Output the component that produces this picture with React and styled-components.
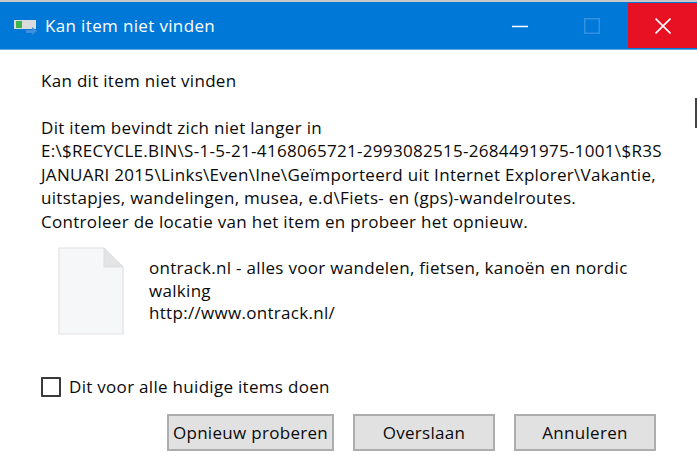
import React from "react";
import styled, { createGlobalStyle } from "styled-components";

const Global = createGlobalStyle`
  html, body {
    margin: 0;
    padding: 0;
    background: #fff;
  }
  body {
    font-family: "Open Sans", "Noto Sans", "Liberation Sans", sans-serif;
    color: #0a0a0a;
  }
`;

const Dialog = styled.div`
  position: relative;
  width: 697px;
  height: 469px;
  overflow: hidden;
  background: #fff;
  display: flex;
  flex-direction: column;
  border-top: 2px solid #c9c9c9;
  box-sizing: border-box;
`;

const TitleBar = styled.div`
  height: 47px;
  background: #0078d7;
  border-bottom: 1px solid #5aa9e6;
  display: flex;
  align-items: stretch;
  color: #fff;
  flex-shrink: 0;
`;

const TitleIcon = styled.svg`
  width: 24px;
  height: 16px;
  margin: 17px 7px 0 14px;
`;

const TitleText = styled.div`
  flex: 1;
  font-size: 17px;
  line-height: 47px;
  letter-spacing: 0.35px;
`;

const WinButton = styled.div`
  width: ${(p) => p.$w}px;
  margin: 1px 0;
  display: flex;
  align-items: center;
  justify-content: center;
  background: ${(p) => p.$bg || "transparent"};
`;

const Body = styled.div`
  padding: 19px 0 0 41px;
  font-size: 17px;
  line-height: 23.5px;
  letter-spacing: 0.3px;
`;

const Heading = styled.div`
  margin-bottom: 23px;
`;

const MessageLine = styled.div`
  white-space: nowrap;
`;

const ItemRow = styled.div`
  display: flex;
  margin-top: 14px;
`;

const FileIcon = styled.svg`
  width: 66px;
  height: 88px;
  margin-left: 17px;
  flex-shrink: 0;
`;

const ItemText = styled.div`
  margin-left: 25px;
  width: 490px;
  line-height: 22.5px;
  padding-top: 10px;
`;

const CheckRow = styled.label`
  display: flex;
  align-items: center;
  margin-top: 40px;
`;

const CheckBox = styled.span`
  width: 20px;
  height: 20px;
  border: 2px solid #3a3a3a;
  box-sizing: border-box;
  border-radius: 1px;
  margin-right: 8px;
`;

const Buttons = styled.div`
  display: flex;
  justify-content: flex-end;
  gap: 19px;
  margin-top: 15px;
  padding-right: 41px;
`;

const Button = styled.div`
  width: ${(p) => p.$w}px;
  height: 37px;
  box-sizing: border-box;
  background: #e1e1e1;
  border: 2px solid #adadad;
  text-align: center;
  line-height: 33px;
  white-space: nowrap;
`;

const ScrollTick = styled.div`
  position: absolute;
  right: 0;
  top: 96px;
  width: 2px;
  height: 30px;
  background: #444;
`;

const lines = [
  "E:\\$RECYCLE.BIN\\S-1-5-21-4168065721-2993082515-2684491975-1001\\$R3S",
  "JANUARI 2015\\Links\\Even\\Ine\\Geïmporteerd uit Internet Explorer\\Vakantie,",
  "uitstapjes, wandelingen, musea, e.d\\Fiets- en (gps)-wandelroutes.",
  "Controleer de locatie van het item en probeer het opnieuw.",
];

export default function App() {
  return (
    <Dialog>
      <Global />
      <TitleBar>
        <TitleIcon viewBox="0 0 24 16">
          <rect x="0" y="1" width="22" height="9" fill="#d8dadb" />
          <rect x="2" y="2" width="6" height="7" fill="#3fb44a" />
          <path d="M12 11h6V8l5 4-5 4v-2h-6z" fill="#3d8fdc" />
        </TitleIcon>
        <TitleText>Kan item niet vinden</TitleText>
        <WinButton $w={70}>
          <svg width="16" height="16" viewBox="0 0 16 16">
            <path d="M0 8.5h16" stroke="#fff" strokeWidth="1.5" />
          </svg>
        </WinButton>
        <WinButton $w={73}>
          <svg width="16" height="16" viewBox="0 0 16 16">
            <rect x="0.75" y="0.75" width="14.5" height="14.5" fill="none" stroke="#3391e0" strokeWidth="1.5" />
          </svg>
        </WinButton>
        <WinButton $w={69} $bg="#e81123">
          <svg width="16" height="16" viewBox="0 0 16 16">
            <path d="M0.5 0.5l15 15M15.5 0.5l-15 15" stroke="#fff" strokeWidth="1.6" />
          </svg>
        </WinButton>
      </TitleBar>
      <Body>
        <Heading>Kan dit item niet vinden</Heading>
        <MessageLine>Dit item bevindt zich niet langer in</MessageLine>
        {lines.map((l) => (
          <MessageLine key={l}>{l}</MessageLine>
        ))}
        <ItemRow>
          <FileIcon viewBox="0 0 66 88">
            <path d="M1 1h45l19 19v67H1z" fill="#f6f7f9" stroke="#e1e2e3" strokeWidth="1.2" />
            <path d="M46 1v19h19z" fill="#e3e4e6" stroke="#dcdddf" strokeWidth="1" />
          </FileIcon>
          <ItemText>
            ontrack.nl - alles voor wandelen, fietsen, kanoën en nordic walking
            <br />
            http://www.ontrack.nl/
          </ItemText>
        </ItemRow>
        <CheckRow>
          <CheckBox />
          Dit voor alle huidige items doen
        </CheckRow>
        <Buttons>
          <Button $w={167}>Opnieuw proberen</Button>
          <Button $w={142}>Overslaan</Button>
          <Button $w={142}>Annuleren</Button>
        </Buttons>
      </Body>
      <ScrollTick />
    </Dialog>
  );
}
